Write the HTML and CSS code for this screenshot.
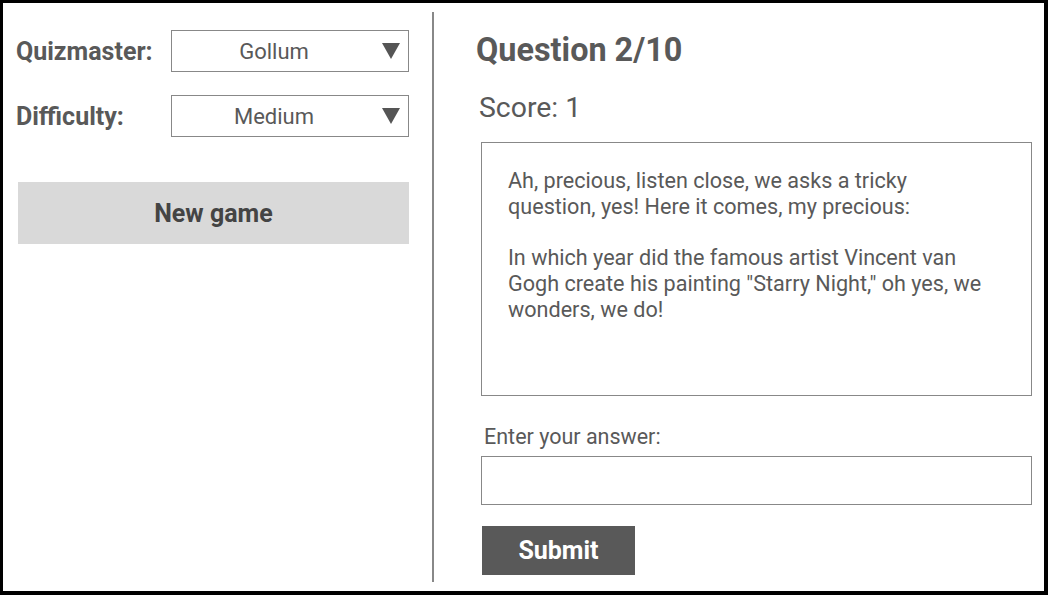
FILE: index.html
```html
<!DOCTYPE html>
<html lang="en">
<head>
<meta charset="utf-8">
<title>Quiz</title>
<link rel="stylesheet" href="styles.css">
</head>
<body>
<div class="frame">
  <aside class="sidebar">
    <div class="field">
      <span class="label">Quizmaster:</span>
      <div class="select"><span class="value">Gollum</span><span class="arrow"></span></div>
    </div>
    <div class="field">
      <span class="label">Difficulty:</span>
      <div class="select"><span class="value">Medium</span><span class="arrow"></span></div>
    </div>
    <button class="new-game">New game</button>
  </aside>
  <div class="divider"></div>
  <main class="content">
    <h1 class="title">Question 2/10</h1>
    <div class="score">Score: 1</div>
    <div class="question">
      <p>Ah, precious, listen close, we asks a tricky question, yes! Here it comes, my precious:</p>
      <p>In which year did the famous artist Vincent van Gogh create his painting "Starry Night," oh yes, we wonders, we do!</p>
    </div>
    <label class="answer-label">Enter your answer:</label>
    <div class="answer"></div>
    <button class="submit">Submit</button>
  </main>
</div>
</body>
</html>
```

FILE: styles.css
```css
* { box-sizing: border-box; }
html, body { margin: 0; padding: 0; }
body {
  font-family: Roboto, "Liberation Sans", sans-serif;
  color: #595959;
  background: #fff;
}
.frame {
  width: 1048px;
  height: 595px;
  border-style: solid;
  border-color: #000;
  border-width: 3px 4px 4px 3px;
  display: flex;
}
.sidebar {
  width: 429px;
  padding: 27px 23px 0 13px;
  display: flex;
  flex-direction: column;
}
.field {
  display: flex;
  align-items: center;
  height: 42px;
  margin-bottom: 23px;
}
.label {
  font-size: 25px;
  font-weight: 700;
}
.select {
  margin-left: auto;
  width: 238px;
  height: 100%;
  border: 1.5px solid #888;
  display: flex;
  align-items: center;
  padding-right: 8px;
}
.value {
  flex: 1;
  text-align: center;
  font-size: 22px;
  padding-right: 6px;
}
.arrow {
  width: 0;
  height: 0;
  border-left: 9px solid transparent;
  border-right: 9px solid transparent;
  border-top: 16px solid #555;
}
.new-game {
  margin: 22px 0 0 2px;
  height: 62px;
  border: 0;
  background: #d9d9d9;
  font-family: inherit;
  font-size: 25px;
  font-weight: 700;
  color: #444;
}
.divider {
  width: 2px;
  background: #888;
  margin: 9px 0;
}
.content {
  flex: 1;
  padding: 29px 12px 0 47px;
  display: flex;
  flex-direction: column;
  align-items: flex-start;
}
.title {
  margin: 0 0 0 -5px;
  font-size: 32.4px;
  font-weight: 700;
  line-height: 36px;
}
.score {
  font-size: 28.4px;
  line-height: 32px;
  margin: 24px 0 0 -2px;
}
.question {
  width: 551px;
  height: 254px;
  margin-top: 18px;
  border: 1.5px solid #888;
  padding: 24.5px 32px 0 26px;
  font-size: 21.6px;
  line-height: 26px;
}
.question p { margin: 0 0 25px; }
.answer-label {
  font-size: 21.5px;
  margin: 29px 0 0 3px;
  line-height: 24px;
}
.answer {
  width: 551px;
  height: 49px;
  margin-top: 7px;
  border: 1.5px solid #888;
}
.submit {
  margin: 21px 0 0 1px;
  width: 153px;
  height: 49px;
  border: 0;
  background: #595959;
  color: #fff;
  font-family: inherit;
  font-size: 25px;
  font-weight: 700;
}
```
